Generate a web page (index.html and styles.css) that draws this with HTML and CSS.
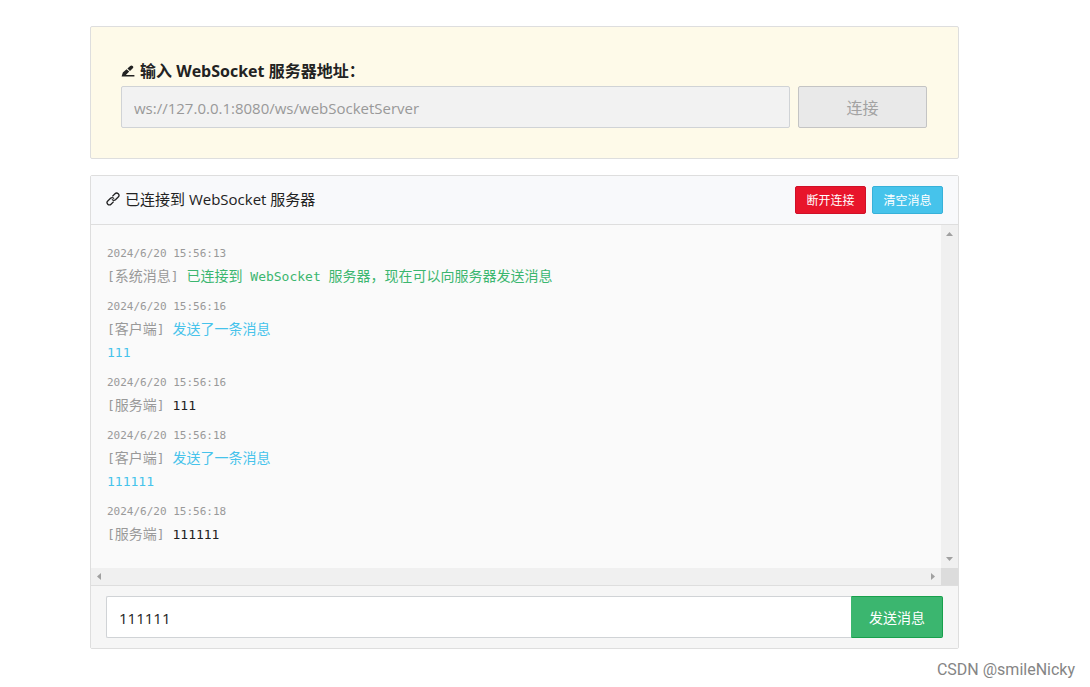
FILE: index.html
```html
<!DOCTYPE html>
<html lang="zh-CN">
<head>
<meta charset="utf-8">
<title>WebSocket</title>
<link rel="stylesheet" href="styles.css">
</head>
<body>
<main class="page">
  <form class="connect">
    <label class="connect-label" for="address">
      <svg class="icon-pencil" viewBox="0 0 14 12" aria-hidden="true"><path d="M.6 11.4 1.8 7.6 5.6 4.2 8.2 6.6 4.9 9.9H13.4V11.4ZM6.4 3.5 9.2 1Q10.4-.1 11.6.9 12.9 2 11.8 3.3L9 5.9Z"/></svg>
      <span>输入 WebSocket 服务器地址：</span>
    </label>
    <div class="connect-row">
      <input class="field address" id="address" type="text" value="ws://127.0.0.1:8080/ws/webSocketServer" disabled>
      <button class="btn btn-connect" type="button" disabled>连接</button>
    </div>
  </form>

  <section class="panel">
    <header class="panel-head">
      <h1 class="status">
        <svg class="icon-link" viewBox="0 0 14 14" aria-hidden="true"><g transform="rotate(-45 7 7)"><path d="M5.6 9.3H1.9A2.3 2.3 0 0 1 1.9 4.7H5.8A2.3 2.3 0 0 1 8 7.4M8.4 4.7H12.1A2.3 2.3 0 0 1 12.1 9.3H8.2A2.3 2.3 0 0 1 6 6.6"/></g></svg>
        <span>已连接到 WebSocket 服务器</span>
      </h1>
      <div class="actions">
        <button class="btn btn-small btn-danger" type="button">断开连接</button>
        <button class="btn btn-small btn-info" type="button">清空消息</button>
      </div>
    </header>

    <div class="log-frame">
      <div class="log">
        <article class="entry">
          <time class="time">2024/6/20 15:56:13</time>
          <p class="line"><span class="from">[<span class="zh">系统消息</span>]</span> <span class="ok"><span class="zh">已连接到</span> WebSocket <span class="zh">服务器，现在可以向服务器发送消息</span></span></p>
        </article>
        <article class="entry">
          <time class="time">2024/6/20 15:56:16</time>
          <p class="line"><span class="from">[<span class="zh">客户端</span>]</span> <span class="sent zh">发送了一条消息</span></p>
          <p class="line sent">111</p>
        </article>
        <article class="entry">
          <time class="time">2024/6/20 15:56:16</time>
          <p class="line"><span class="from">[<span class="zh">服务端</span>]</span> 111</p>
        </article>
        <article class="entry">
          <time class="time">2024/6/20 15:56:18</time>
          <p class="line"><span class="from">[<span class="zh">客户端</span>]</span> <span class="sent zh">发送了一条消息</span></p>
          <p class="line sent">111111</p>
        </article>
        <article class="entry">
          <time class="time">2024/6/20 15:56:18</time>
          <p class="line"><span class="from">[<span class="zh">服务端</span>]</span> 111111</p>
        </article>
      </div>
      <div class="bar bar-y" aria-hidden="true">
        <svg class="arrow-v" viewBox="0 0 7 4"><path d="M0 4 3.5 0 7 4Z"/></svg>
        <svg class="arrow-v" viewBox="0 0 7 4"><path d="M0 0 3.5 4 7 0Z"/></svg>
      </div>
      <div class="bar bar-x" aria-hidden="true">
        <svg class="arrow-h" viewBox="0 0 4 7"><path d="M4 0 0 3.5 4 7Z"/></svg>
        <svg class="arrow-h" viewBox="0 0 4 7"><path d="M0 0 4 3.5 0 7Z"/></svg>
      </div>
      <div class="corner"></div>
    </div>

    <form class="send">
      <input class="field message" type="text" value="111111" aria-label="消息">
      <button class="btn btn-send" type="button">发送消息</button>
    </form>
  </section>
</main>
<footer class="credit">CSDN @smileNicky</footer>
</body>
</html>
```
FILE: styles.css
```css
* {
  box-sizing: border-box;
}

body {
  margin: 0;
  background: #fff;
  color: #222;
  font-family: "Open Sans", "Noto Sans CJK SC", sans-serif;
  font-size: 15px;
  line-height: 24px;
}

.page {
  display: flex;
  flex-direction: column;
  gap: 16px;
  padding: 26px 131px 0 90px;
}

.connect,
.panel {
  border: 1px solid #dedede;
  border-radius: 2px;
}

.connect {
  padding: 32px 31px 30px 30px;
  background: #fefae9;
}

.connect-label {
  display: flex;
  align-items: center;
  gap: 5px;
  padding-bottom: 3px;
  font-size: 16px;
  font-weight: 700;
}

.icon-pencil {
  width: 14px;
  height: 12px;
  fill: #222;
}

.connect-row {
  display: flex;
  gap: 8px;
}

.field {
  flex: 1;
  min-width: 0;
  height: 42px;
  padding: 2px 12px 0;
  border: 1px solid #d0d3d6;
  border-radius: 2px;
  background: #fff;
  color: #222;
  font: inherit;
}

.address {
  background: #f2f2f2;
  color: #999;
}

.btn {
  padding: 2px 0 0;
  border: 1px solid;
  border-radius: 2px;
  color: #fff;
  font: inherit;
}

.btn-connect {
  width: 129px;
  border-color: #c4c4c4;
  background: #e9e9e9;
  color: #a2a2a2;
  font-size: 16px;
}

.panel-head {
  display: flex;
  align-items: center;
  justify-content: space-between;
  padding: 10px 15px;
  border-bottom: 1px solid #dedede;
  background: #f8f9fb;
}

.status {
  display: flex;
  align-items: center;
  gap: 5px;
  margin: 0;
  padding-bottom: 2px;
  font-size: 15px;
  font-weight: 400;
}

.icon-link {
  width: 14px;
  height: 14px;
  fill: none;
  stroke: #222;
  stroke-width: 1.3;
}

.actions {
  display: flex;
  gap: 6px;
}

.btn-small {
  width: 71px;
  height: 28px;
  font-size: 12px;
}

.btn-danger {
  border-color: #cf1028;
  background: #e8152b;
}

.btn-info {
  border-color: #37b1d9;
  background: #46c3eb;
}

.log-frame {
  display: grid;
  grid-template-columns: 1fr 17px;
  grid-template-rows: auto 17px;
}

.log {
  display: flex;
  flex-direction: column;
  gap: 8px;
  padding: 18px 16px 22px;
  background: #fafafa;
  font-family: "DejaVu Sans Mono", "Noto Sans CJK SC", monospace;
  font-size: 13px;
}

.time {
  display: block;
  color: #999;
  font-size: 11px;
  line-height: 22px;
}

.line {
  height: 23px;
  margin: 0;
  line-height: 23px;
}

.zh {
  font-family: "Noto Sans CJK SC", sans-serif;
  font-size: 14px;
  line-height: 1;
}

.from {
  color: #999;
}

.ok {
  color: #3bb66f;
}

.sent {
  color: #46c3eb;
}

.bar {
  display: flex;
  align-items: center;
  justify-content: space-between;
  background: #f0f0f0;
}

.bar-y {
  flex-direction: column;
  padding: 7px 0;
}

.bar-x {
  padding: 0 6px;
}

.arrow-v {
  width: 7px;
  height: 4px;
  fill: #a0a0a0;
}

.arrow-h {
  width: 4px;
  height: 7px;
  fill: #a0a0a0;
}

.corner {
  background: #dcdcdc;
}

.send {
  display: flex;
  padding: 10px 15px;
  border-top: 1px solid #dedede;
  background: #f6f6f6;
}

.message {
  border-right: 0;
  border-radius: 2px 0 0 2px;
}

.btn-send {
  width: 92px;
  border-color: #18a04c;
  border-left-color: #3bb66f;
  border-radius: 0 2px 2px 0;
  background: #3bb66f;
  font-size: 14px;
}

.credit {
  padding: 9px 15px 0 0;
  color: #858585;
  font-family: Roboto, "Liberation Sans", sans-serif;
  font-size: 16px;
  text-align: right;
}
```
